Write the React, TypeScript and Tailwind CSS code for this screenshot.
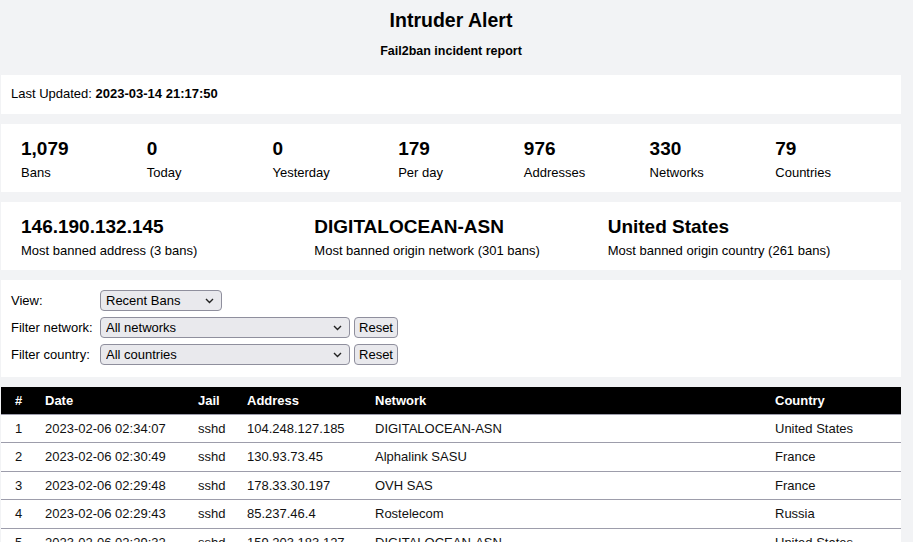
import React from "react";

const stats = [
  { value: "1,079", label: "Bans" },
  { value: "0", label: "Today" },
  { value: "0", label: "Yesterday" },
  { value: "179", label: "Per day" },
  { value: "976", label: "Addresses" },
  { value: "330", label: "Networks" },
  { value: "79", label: "Countries" },
];

const tops = [
  { value: "146.190.132.145", label: "Most banned address (3 bans)" },
  { value: "DIGITALOCEAN-ASN", label: "Most banned origin network (301 bans)" },
  { value: "United States", label: "Most banned origin country (261 bans)" },
];

const bans = [
  ["1", "2023-02-06 02:34:07", "sshd", "104.248.127.185", "DIGITALOCEAN-ASN", "United States"],
  ["2", "2023-02-06 02:30:49", "sshd", "130.93.73.45", "Alphalink SASU", "France"],
  ["3", "2023-02-06 02:29:48", "sshd", "178.33.30.197", "OVH SAS", "France"],
  ["4", "2023-02-06 02:29:43", "sshd", "85.237.46.4", "Rostelecom", "Russia"],
  ["5", "2023-02-06 02:29:32", "sshd", "159.203.183.127", "DIGITALOCEAN-ASN", "United States"],
];

const Chevron = () => (
  <svg width="9" height="6" viewBox="0 0 9 6" className="absolute right-[8px] top-[8px] pointer-events-none">
    <polyline points="1,1 4.5,4.5 8,1" fill="none" stroke="#222" strokeWidth="1.4" />
  </svg>
);

const Select: React.FC<{ width: string; value: string }> = ({ width, value }) => (
  <div className={`relative ${width} h-[21px]`}>
    <select
      defaultValue={value}
      className="appearance-none w-full h-full rounded-[4px] border border-[#8f8f9d] bg-[#e9e9ed] pl-[5px] text-[13px] leading-[19px] text-black outline-none"
    >
      <option>{value}</option>
    </select>
    <Chevron />
  </div>
);

const ResetButton = () => (
  <button className="h-[21px] w-[44px] rounded-[4px] border border-[#8f8f9d] bg-[#e9e9ed] text-[13px] leading-[19px] text-black">
    Reset
  </button>
);

export default function App() {
  return (
    <div
      className="h-[542px] w-[913px] overflow-hidden bg-[#f2f3f5] text-[13px] leading-[15px] text-black"
      style={{ fontFamily: '"Liberation Sans", Arial, sans-serif' }}
    >
      <div className="ml-[1px] w-[900px] flex flex-col gap-[10px]">
        <header className="flex flex-col items-center pt-[9px] pb-[7px]">
          <h1 className="text-[19.5px] leading-[22px] font-bold">Intruder Alert</h1>
          <h2 className="mt-[13px] text-[12.5px] leading-[14px] font-bold">Fail2ban incident report</h2>
        </header>

        <div className="bg-white pl-[10px] pt-[11px] pb-[13px]">
          Last Updated: <b>2023-03-14 21:17:50</b>
        </div>

        <div className="bg-white px-[10px] pt-[14px] pb-[12px] grid grid-cols-7">
          {stats.map((s) => (
            <div key={s.label} className="px-[10px]">
              <div className="text-[19px] leading-[22px] font-bold">{s.value}</div>
              <div className="mt-[5px]">{s.label}</div>
            </div>
          ))}
        </div>

        <div className="bg-white px-[10px] pt-[14px] pb-[12px] grid grid-cols-3">
          {tops.map((s) => (
            <div key={s.label} className="px-[10px]">
              <div className="text-[19px] leading-[22px] font-bold">{s.value}</div>
              <div className="mt-[5px]">{s.label}</div>
            </div>
          ))}
        </div>

        <div className="bg-white px-[10px] pt-[10px] pb-[12px] flex flex-col gap-[6px]">
          <div className="flex items-center">
            <span className="w-[89px]">View:</span>
            <Select width="w-[122px]" value="Recent Bans" />
          </div>
          <div className="flex items-center">
            <span className="w-[89px]">Filter network:</span>
            <Select width="w-[250px]" value="All networks" />
            <span className="ml-[4px]"><ResetButton /></span>
          </div>
          <div className="flex items-center">
            <span className="w-[89px]">Filter country:</span>
            <Select width="w-[250px]" value="All countries" />
            <span className="ml-[4px]"><ResetButton /></span>
          </div>
        </div>

        <table className="w-[900px] table-fixed border-collapse bg-white">
          <colgroup>
            <col className="w-[30px]" />
            <col className="w-[153px]" />
            <col className="w-[49px]" />
            <col className="w-[128px]" />
            <col className="w-[400px]" />
            <col className="w-[140px]" />
          </colgroup>
          <thead>
            <tr className="bg-black text-white border-b border-[#9d9dab]">
              {["#", "Date", "Jail", "Address", "Network", "Country"].map((h) => (
                <th key={h} className="h-[27px] pl-[14px] text-left font-bold">
                  {h}
                </th>
              ))}
            </tr>
          </thead>
          <tbody>
            {bans.map((r) => (
              <tr key={r[0]} className="border-b border-[#9d9dab] text-[#111]">
                {r.map((c, i) => (
                  <td key={i} className="h-[28.5px] pl-[14px]">
                    {c}
                  </td>
                ))}
              </tr>
            ))}
          </tbody>
        </table>
      </div>
    </div>
  );
}
